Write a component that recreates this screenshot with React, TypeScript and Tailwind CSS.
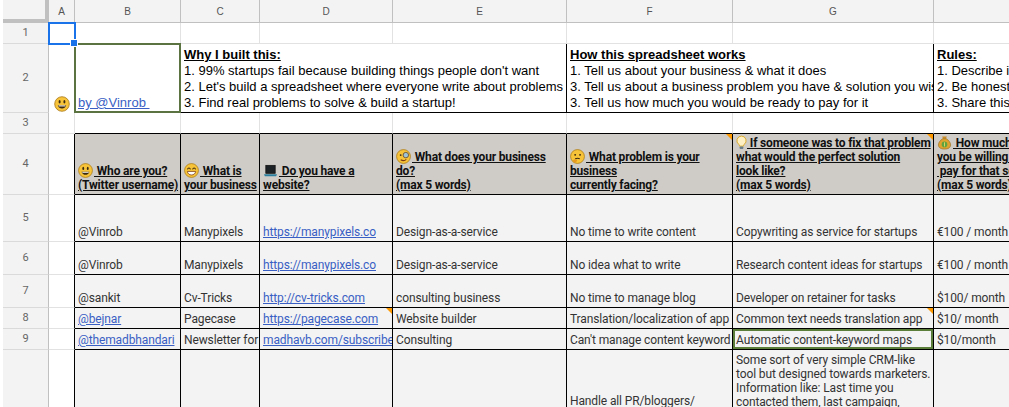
import React from "react";

const emojiCls = "inline-block w-[15px] h-[15px] align-[-3px] mr-[1px]";

function Face({ kind }: { kind: string }) {
  return (
    <svg viewBox="0 0 16 16" className={emojiCls}>
      <circle cx="8" cy="8" r="7.4" fill="#f7c338" stroke="#a9791a" strokeWidth="0.8" />
      {kind === "smile" && (
        <>
          <ellipse cx="5.6" cy="5.8" rx="1" ry="1.7" fill="#3b2a12" />
          <ellipse cx="10.4" cy="5.8" rx="1" ry="1.7" fill="#3b2a12" />
          <path d="M3.8 9.2c1 4.4 7.4 4.4 8.4 0z" fill="#3b2a12" />
          <path d="M4.6 9.4h6.800v1h-6.800z" fill="#fff" />
        </>
      )}
      {kind === "grin" && (
        <>
          <path d="M3.6 6.8c.8-2 2.600-2 3.300 0M9.100 6.800c.8-2 2.600-2 3.300 0" fill="none" stroke="#3b2a12" strokeWidth="1.100" />
          <path d="M3.600 9h8.800c-.4 5-8.400 5-8.800 0z" fill="#fff" stroke="#7a3a12" strokeWidth="0.800" />
        </>
      )}
      {kind === "mono" && (
        <>
          <circle cx="10.500" cy="6.500" r="2.900" fill="#9fc3d6" stroke="#6e5a3a" strokeWidth="1" />
          <circle cx="5" cy="6.500" r="1" fill="#3b2a12" />
          <path d="M5 11.500c2 1.200 4.500 1 6-.5" fill="none" stroke="#7a3a12" strokeWidth="1.100" />
        </>
      )}
      {kind === "think" && (
        <>
          <circle cx="5.500" cy="6.200" r="1" fill="#3b2a12" />
          <circle cx="10.700" cy="6.200" r="1" fill="#3b2a12" />
          <path d="M5.500 10.500c2-.9 3.400-.9 5 0" fill="none" stroke="#3b2a12" strokeWidth="1.100" />
          <path d="M3 12.200c1.500-1.500 4-1.600 4.500-.5.400 1.400-2 3.200-3.600 2.600z" fill="#e59a1f" />
        </>
      )}
    </svg>
  );
}

function Laptop() {
  return (
    <svg viewBox="0 0 16 16" className={emojiCls}>
      <rect x="3" y="2.500" width="10" height="8.500" fill="#1c2125" stroke="#111" strokeWidth="0.800" />
      <path d="M1 12h14l-1 2H2z" fill="#2c7f9e" />
    </svg>
  );
}

function Bulb() {
  return (
    <svg viewBox="2 0 12 16" className="inline-block w-[11px] h-[15px] align-[-3px]">
      <path d="M8 1a5 5 0 0 0-3 9c.7.700.8 1.300.9 2h4.200c.1-.7.200-1.300.900-2a5 5 0 0 0-3-9z" fill="#fdf0c4" stroke="#d9a520" strokeWidth="1" />
      <rect x="6" y="12.300" width="4" height="2.700" rx="0.800" fill="#6a7f8c" />
    </svg>
  );
}

function Money() {
  return (
    <svg viewBox="0 0 16 16" className={emojiCls}>
      <path d="M5.500 1.500h5l-1 2.500h-3z" fill="#c98a25" />
      <path d="M6 4c-3 2-4.500 4.500-4.500 6.500C1.500 13.500 4 15 8 15s6.500-1.500 6.500-4.500C14.500 8.500 13 6 10 4z" fill="#dea22f" stroke="#9a6c1c" strokeWidth="0.700" />
      <circle cx="8" cy="10" r="3" fill="#5ea33d" />
      <path d="M8 7.800v4.400" stroke="#e6d463" strokeWidth="1" />
    </svg>
  );
}

const rowHdr = "bg-[#f3f3f3] border-r border-r-[#c0c0c0] border-b border-b-[#dadada] flex items-center justify-center text-[11px] text-[#666] font-['Roboto',sans-serif]";
const colHdr = "bg-[#f3f3f3] border-r border-r-[#c0c0c0] border-b border-b-[#c0c0c0] flex items-center justify-center text-[10px] text-[#555] font-['Liberation_Sans',sans-serif]";
const empty = "bg-white border-r border-r-[#e2e2e2] border-b border-b-[#e2e2e2]";
const cellBase = "relative bg-[#f3f3f3] border-r border-b border-black flex items-end px-[3px] pb-[2px] overflow-hidden whitespace-nowrap text-[12px] leading-[14px] tracking-[-0.12px] text-[#333] font-['Roboto',sans-serif]";
const headCell = "relative bg-[#cfccc7] border-r border-b border-black flex items-end px-[3px] pb-[2px] overflow-hidden whitespace-nowrap text-[12px] leading-[14px] tracking-[-0.18px] font-bold underline text-[#111] font-['Roboto',sans-serif]";
const sideA = "bg-white border-r border-r-black border-b border-b-[#e2e2e2]";
const linkCls = "text-[#3a5fc4] underline";
const notesCls = "relative bg-white border-r border-b border-black flex items-end px-[3px] pb-[1px] overflow-hidden whitespace-nowrap text-[13px] leading-[16px] text-black font-['Liberation_Sans',sans-serif]";

function Corner() {
  return <span className="absolute top-0 right-0 w-0 h-0 border-t-[6px] border-l-[6px] border-t-[#ff9900] border-l-transparent" />;
}

function Head({ lines }: { lines: React.ReactNode[] }) {
  return (
    <div className="flex flex-col w-full">
      {lines.map((l, i) => (
        <div key={i}>{l}</div>
      ))}
    </div>
  );
}

type Row = { n: string; cells: React.ReactNode[] };

const rows: Row[] = [
  { n: "5", cells: ["@Vinrob", "Manypixels", <a className={linkCls}>https://manypixels.co</a>, "Design-as-a-service", "No time to write content", "Copywriting as service for startups", "€100 / month"] },
  { n: "6", cells: ["@Vinrob", "Manypixels", <a className={linkCls}>https://manypixels.co</a>, "Design-as-a-service", "No idea what to write", "Research content ideas for startups", "€100 / month"] },
  { n: "7", cells: ["@sankit", "Cv-Tricks", <a className={linkCls}>http://cv-tricks.com</a>, "consulting business", "No time to manage blog", "Developer on retainer for tasks", "$100/ month"] },
  { n: "8", cells: [<a className={linkCls}>@bejnar</a>, "Pagecase", <><a className={linkCls}>https://pagecase.com</a><Corner /></>, "Website builder", "Translation/localization of app", <>Common text needs translation app<Corner /></>, "$10/ month"] },
  { n: "9", cells: [<a className={linkCls}>@themadbhandari</a>, "Newsletter for", <a className={linkCls}>madhavb.com/subscribe</a>, "Consulting", "Can't manage content keyword", <>Automatic content-keyword maps<span className="absolute inset-0 border-2 border-[#5b7f3a]" /></>, "$10/month"] },
];

export default function App() {
  return (
    <div className="w-[1009px] h-[407px] overflow-hidden bg-white">
      <div className="grid grid-cols-[3px_46px_26px_106px_79px_133px_174px_166px_201px_200px] grid-rows-[23px_21px_69px_21px_61px_47px_33px_33px_21px_21px_200px]">
        {/* header row */}
        <div className="bg-white" />
        <div className="bg-[#f3f3f3] border-r-[4px] border-b-[4px] border-[#c0c0c0]" />
        {["A", "B", "C", "D", "E", "F", "G", "H"].map((c) => (
          <div key={c} className={colHdr + (c === "A" ? " bg-[#e0e0e0]" : "")}>{c === "H" ? "" : c}</div>
        ))}

        {/* row 1 */}
        <div className="bg-white" />
        <div className={rowHdr + " bg-[#e0e0e0]"}>1</div>
        <div className="relative bg-white z-10">
          <span className="absolute inset-[-1px] border-2 border-[#1a73e8]" />
          <span className="absolute right-[-3px] bottom-[-3px] w-[6px] h-[6px] bg-[#1a73e8] border border-white box-content" />
        </div>
        <div className={empty} /><div className={empty} /><div className={empty} /><div className={empty} /><div className={empty} /><div className={empty} /><div className={empty} />

        {/* row 2 */}
        <div className="bg-white" />
        <div className={rowHdr}>2</div>
        <div className="bg-white border-r border-r-[#e2e2e2] flex items-end justify-center pb-[1px]">
          <svg viewBox="0 0 16 16" className="w-[16px] h-[16px]">
            <circle cx="8" cy="8" r="7.300" fill="#f7c338" stroke="#a9791a" strokeWidth="0.800" />
            <ellipse cx="5.600" cy="5.800" rx="1" ry="1.700" fill="#3b2a12" />
            <ellipse cx="10.400" cy="5.800" rx="1" ry="1.700" fill="#3b2a12" />
            <path d="M3.800 9.200c1 4.400 7.400 4.400 8.400 0z" fill="#3b2a12" />
            <path d="M4.600 9.400h6.800v1h-6.800z" fill="#fff" />
          </svg>
        </div>
        <div className="bg-white border-2 border-[#5b7340] flex items-end px-[2px] text-[13px] leading-[16px] font-['Liberation_Sans',sans-serif] ml-[-1px] mt-[-1px]">
          <a className="text-[#3a5fc4] underline whitespace-pre">by @Vinrob </a>
        </div>
        <div className={notesCls + " col-span-3"}>
          <div>
            <div className="font-bold underline">Why I built this:</div>
            <div>1. 99% startups fail because building things people don't want</div>
            <div>2. Let's build a spreadsheet where everyone write about problems</div>
            <div>3. Find real problems to solve &amp; build a startup!</div>
          </div>
        </div>
        <div className={notesCls + " col-span-2"}>
          <div>
            <div className="font-bold underline">How this spreadsheet works</div>
            <div>1. Tell us about your business &amp; what it does</div>
            <div>3. Tell us about a business problem you have &amp; solution you wish existed</div>
            <div>3. Tell us how much you would be ready to pay for it</div>
          </div>
        </div>
        <div className={notesCls}>
          <div>
            <div className="font-bold underline">Rules:</div>
            <div>1. Describe in 5 words</div>
            <div>2. Be honest</div>
            <div>3. Share this</div>
          </div>
        </div>

        {/* row 3 */}
        <div className="bg-white" />
        <div className={rowHdr}>3</div>
        <div className="bg-white border-r border-r-[#e2e2e2] border-b border-b-[#e2e2e2]" />
        {[0, 1, 2, 3, 4, 5, 6].map((i) => (
          <div key={i} className="bg-white border-r border-r-[#e2e2e2] border-b border-b-black" />
        ))}

        {/* row 4 */}
        <div className="bg-white" />
        <div className={rowHdr}>4</div>
        <div className={sideA} />
        <div className={headCell}>
          <Head lines={[<><Face kind="smile" /> Who are you?</>, "(Twitter username)"]} />
        </div>
        <div className={headCell}>
          <Head lines={[<><Face kind="grin" /> What is</>, "your business"]} />
        </div>
        <div className={headCell}>
          <Head lines={[<><Laptop /> Do you have a</>, "website?"]} />
        </div>
        <div className={headCell}>
          <Head lines={[<><Face kind="mono" /> What does your business</>, "do?", "(max 5 words)"]} />
        </div>
        <div className={headCell}>
          <Head lines={[<><Face kind="think" /> What problem is your</>, "business", "currently facing?"]} />
          <Corner />
        </div>
        <div className={headCell}>
          <Head lines={[<><Bulb /> If someone was to fix that problem</>, "what would the perfect solution", "look like?", "(max 5 words)"]} />
          <Corner />
        </div>
        <div className={headCell + " whitespace-pre"}>
          <Head lines={[<><Money /> How much would</>, "you be willing to", " pay for that solution", "(max 5 words)"]} />
        </div>

        {/* data rows */}
        {rows.map((r) => (
          <React.Fragment key={r.n}>
            <div className="bg-white" />
            <div className={rowHdr}>{r.n}</div>
            <div className={sideA} />
            {r.cells.map((c, i) => (
              <div key={i} className={cellBase + (r.n === "8" || r.n === "9" ? " pb-[1px]" : "")}>{c}</div>
            ))}
          </React.Fragment>
        ))}

        {/* row 10 */}
        <div className="bg-white" />
        <div className={rowHdr}>10</div>
        <div className={sideA} />
        <div className={cellBase} /><div className={cellBase} /><div className={cellBase} /><div className={cellBase} />
        <div className={cellBase + " items-start pt-[44px] pb-0"}>
          <div>Handle all PR/bloggers/</div>
        </div>
        <div className={cellBase + " items-start pb-0 pt-[3px]"}>
          <div>
            <div>Some sort of very simple CRM-like</div>
            <div>tool but designed towards marketers.</div>
            <div>Information like: Last time you</div>
            <div>contacted them, last campaign,</div>
          </div>
        </div>
        <div className={cellBase} />
      </div>
    </div>
  );
}
